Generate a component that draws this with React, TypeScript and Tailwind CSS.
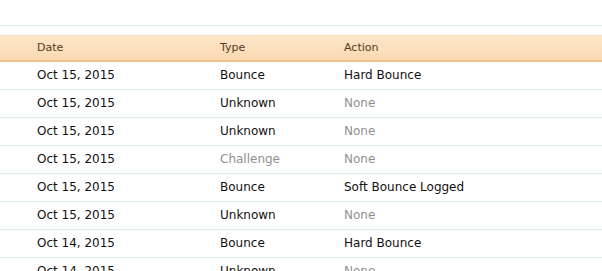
import React from 'react';

type Row = { date: string; type: string; action: string };

const rows: Row[] = [
  { date: 'Oct 15, 2015', type: 'Bounce', action: 'Hard Bounce' },
  { date: 'Oct 15, 2015', type: 'Unknown', action: 'None' },
  { date: 'Oct 15, 2015', type: 'Unknown', action: 'None' },
  { date: 'Oct 15, 2015', type: 'Challenge', action: 'None' },
  { date: 'Oct 15, 2015', type: 'Bounce', action: 'Soft Bounce Logged' },
  { date: 'Oct 15, 2015', type: 'Unknown', action: 'None' },
  { date: 'Oct 14, 2015', type: 'Bounce', action: 'Hard Bounce' },
  { date: 'Oct 14, 2015', type: 'Unknown', action: 'None' },
];

const App: React.FC = () => {
  return (
    <div className="w-[602px] h-[271px] overflow-hidden bg-white font-['DejaVu_Sans',sans-serif]">
      <div className="h-[26px] border-b border-[#dcecef]"></div>
      <div className="mt-[9px] h-[27px] flex items-center pl-[37px] text-[11px] text-[#54391c] bg-gradient-to-b from-[#fde6c9] to-[#fbd9b1] border-t border-[#f8dcb8] border-b-2 border-b-[#f3c08a]">
        <div className="w-[183px]">Date</div>
        <div className="w-[124px]">Type</div>
        <div>Action</div>
      </div>
      {rows.map((r, i) => (
        <div key={i} className="h-[28px] flex items-center pb-[1px] pl-[37px] text-[12px] text-[#111] border-b border-[#dcecef]">
          <div className="w-[183px]">{r.date}</div>
          <div className={`w-[124px] ${r.type === 'Challenge' ? 'text-[#8f8f8f]' : ''}`}>{r.type}</div>
          <div className={r.action === 'None' ? 'text-[#8f8f8f]' : ''}>{r.action}</div>
        </div>
      ))}
    </div>
  );
};

export default App;
